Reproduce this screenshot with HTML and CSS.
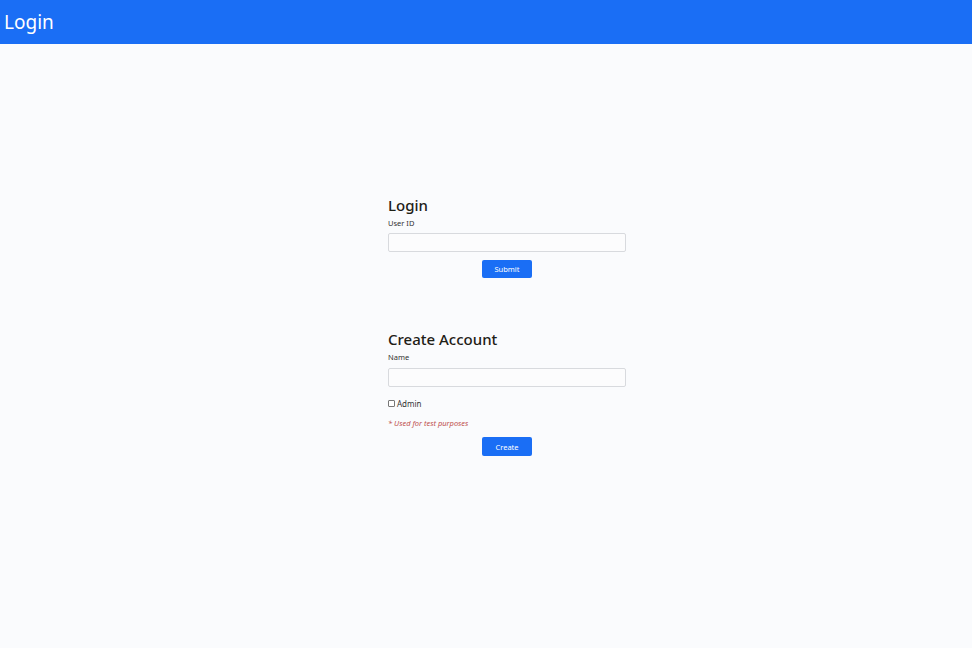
FILE: index.html
```html
<!DOCTYPE html>
<html>
<head>
<meta charset="utf-8">
<link rel="stylesheet" href="styles.css">
</head>
<body>
<header class="topbar"><span class="brand">Login</span></header>
<main class="page">
  <section class="card">
    <h2 class="title">Login</h2>
    <label class="label">User ID</label>
    <input class="field" type="text">
    <div class="actions"><button class="btn">Submit</button></div>
  </section>
  <section class="card second">
    <h2 class="title">Create Account</h2>
    <label class="label">Name</label>
    <input class="field" type="text">
    <label class="check"><span class="box"></span>Admin</label>
    <p class="note">* Used for test purposes</p>
    <div class="actions"><button class="btn">Create</button></div>
  </section>
</main>
</body>
</html>
```
FILE: styles.css
```css
html, body { margin: 0; padding: 0; }
body {
  background: #fafbfd;
  font-family: "Noto Sans", "Open Sans", sans-serif;
  color: #212529;
  width: 972px;
  height: 648px;
  overflow: hidden;
}
.topbar {
  height: 44px;
  background: #1a6ef5;
  display: flex;
  align-items: center;
  padding-left: 4px;
}
.brand {
  color: #fff;
  font-size: 19px;
  line-height: 1;
}
.page {
  width: 238px;
  margin: 0 auto;
  padding: 150px 0 0 42px;
}
.card { display: flex; flex-direction: column; }
.second { margin-top: 50px; }
.title {
  margin: 0;
  font-size: 15px;
  font-weight: 500;
  line-height: 22px;
  color: #1e2016;
}
.label {
  font-size: 7.5px;
  line-height: 11px;
  margin-top: 2px;
  color: #333;
}
.field {
  box-sizing: border-box;
  height: 19px;
  margin: 4px 0 0;
  border: 1px solid #d8dade;
  border-radius: 2px;
  background: #fcfcfd;
  padding: 0;
}
.second .field { margin-top: 5px; }
.actions { display: flex; justify-content: center; margin-top: 8px; }
.btn {
  width: 50px;
  height: 18px;
  background: #1a6ef5;
  color: #fff;
  border: none;
  border-radius: 2px;
  font-family: inherit;
  font-size: 7.5px;
  padding: 0;
}
.second .btn { height: 19px; }
.check {
  display: flex;
  align-items: center;
  gap: 2px;
  font-size: 8px;
  line-height: 11px;
  margin-top: 11px;
  color: #333;
}
.box {
  width: 5px;
  height: 5px;
  border: 1px solid #777;
  border-radius: 1px;
  background: #fff;
}
.note {
  margin: 9px 0 0;
  font-size: 7.5px;
  line-height: 11px;
  font-style: italic;
  color: #c0504d;
}
.second .actions { margin-top: 8px; }
```
